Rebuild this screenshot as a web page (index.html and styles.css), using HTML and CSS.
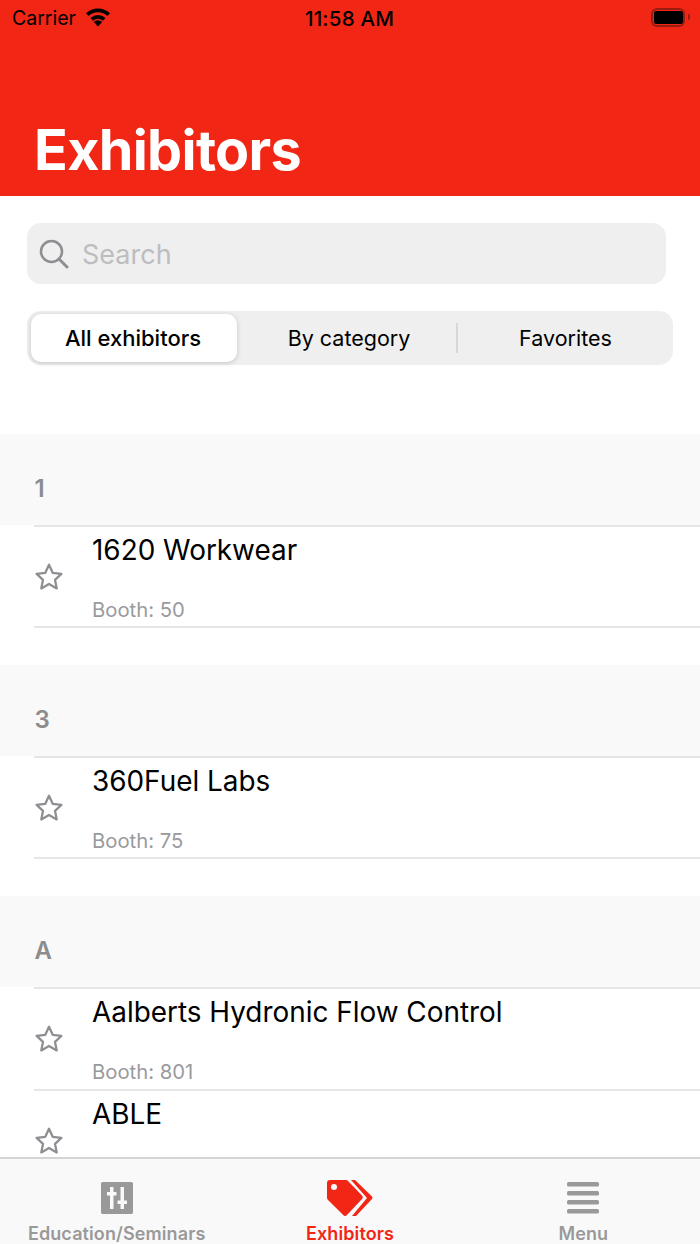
FILE: index.html
```html
<!DOCTYPE html>
<html lang="en">
<head>
<meta charset="utf-8">
<title>Exhibitors</title>
<link rel="stylesheet" href="styles.css">
</head>
<body>
<div class="app">
  <header class="hero">
    <div class="status">
      <div class="status-left">
        <span class="carrier">Carrier</span>
        <svg class="wifi" width="26" height="20" viewBox="0 0 26 20" fill="none"><path d="M2.300 7.600A15.500 15.500 0 0 1 23.700 7.600" stroke="#000" stroke-width="3.800"/><path d="M6.800 12.300A9 9 0 0 1 19.200 12.300" stroke="#000" stroke-width="3.800"/><path d="M13 19.500L8.800 14.900A6.200 6.200 0 0 1 17.200 14.900Z" fill="#000"/></svg>
      </div>
      <span class="clock">11:58 AM</span>
      <div class="battery"><span class="battery-fill"></span></div>
    </div>
    <h1 class="title">Exhibitors</h1>
  </header>

  <div class="controls">
    <div class="search">
      <svg class="search-icon" width="30" height="30" viewBox="0 0 30 30" fill="none"><circle cx="12.500" cy="12.500" r="10.500" stroke="#8e8e93" stroke-width="2.600"/><path d="M20 20l8 8" stroke="#8e8e93" stroke-width="3" stroke-linecap="round"/></svg>
      <span class="search-text">Search</span>
    </div>
    <div class="segments">
      <div class="segment active">All exhibitors</div>
      <div class="segment shifted">By category</div>
      <div class="divider"></div>
      <div class="segment">Favorites</div>
    </div>
  </div>

  <main class="list">
    <section class="group">
      <h2 class="group-head">1</h2>
      <div class="row">
        <svg class="star" width="30" height="30" viewBox="0 0 30 30"><path d="M15 2.800l3.700 8 8.700 1-6.400 6 1.700 8.600L15 22l-7.700 4.400L9 17.800l-6.400-6 8.700-1z" fill="none" stroke="#8e8e93" stroke-width="2.300" stroke-linejoin="round"/></svg>
        <div class="row-body"><div class="name">1620 Workwear</div><div class="booth">Booth: 50</div></div>
      </div>
    </section>
    <section class="group">
      <h2 class="group-head">3</h2>
      <div class="row">
        <svg class="star" width="30" height="30" viewBox="0 0 30 30"><path d="M15 2.800l3.700 8 8.700 1-6.400 6 1.700 8.600L15 22l-7.700 4.400L9 17.800l-6.400-6 8.700-1z" fill="none" stroke="#8e8e93" stroke-width="2.300" stroke-linejoin="round"/></svg>
        <div class="row-body"><div class="name">360Fuel Labs</div><div class="booth">Booth: 75</div></div>
      </div>
    </section>
    <section class="group">
      <h2 class="group-head">A</h2>
      <div class="row">
        <svg class="star" width="30" height="30" viewBox="0 0 30 30"><path d="M15 2.800l3.700 8 8.700 1-6.400 6 1.700 8.600L15 22l-7.700 4.400L9 17.800l-6.400-6 8.700-1z" fill="none" stroke="#8e8e93" stroke-width="2.300" stroke-linejoin="round"/></svg>
        <div class="row-body"><div class="name">Aalberts Hydronic Flow Control</div><div class="booth">Booth: 801</div></div>
      </div>
      <div class="row">
        <svg class="star" width="30" height="30" viewBox="0 0 30 30"><path d="M15 2.800l3.700 8 8.700 1-6.400 6 1.700 8.600L15 22l-7.700 4.400L9 17.800l-6.400-6 8.700-1z" fill="none" stroke="#8e8e93" stroke-width="2.300" stroke-linejoin="round"/></svg>
        <div class="row-body"><div class="name">ABLE</div></div>
      </div>
    </section>
  </main>

  <nav class="tabs">
    <div class="tab">
      <svg class="tab-icon" width="32" height="36" viewBox="0 -2 32 36"><path fill-rule="evenodd" fill="#999" d="M2.500 0h27A2 2 0 0 1 32 2.500v27a2 2 0 0 1-2.500 2.500h-27A2 2 0 0 1 0 29.500v-27A2 2 0 0 1 2.500 0zM9 5v5H6v3.500h3V27h3.500V13.500h3V10h-3V5zM19.500 5v13.500h-3V22h3v5H23v-5h3v-3.500h-3V5z"/></svg>
      <span class="tab-label">Education/Seminars</span>
    </div>
    <div class="tab tab-active">
      <svg class="tab-icon" width="46" height="36" viewBox="0 0 46 36"><path fill="#f12614" d="M3 0h16a3 3 0 0 1 2 .9L35 15.500a2.600 2.600 0 0 1 0 3.500L20 35a2.600 2.600 0 0 1-3.800 0L1 20a3 3 0 0 1-1-2.200V3a3 3 0 0 1 3-3zM7 4a3 3 0 1 0 0 6 3 3 0 0 0 0-6z"/><path fill="#f12614" d="M24 0h4L44.500 16a2.400 2.400 0 0 1 0 3.500L29 36h-4l15-18z"/></svg>
      <span class="tab-label">Exhibitors</span>
    </div>
    <div class="tab">
      <svg class="tab-icon" width="32" height="36" viewBox="0 -2 32 36"><g fill="#999"><rect y="0" width="32" height="4.400" rx="1.500"/><rect y="9" width="32" height="4.400" rx="1.500"/><rect y="18" width="32" height="4.400" rx="1.500"/><rect y="27" width="32" height="4.400" rx="1.500"/></g></svg>
      <span class="tab-label">Menu</span>
    </div>
  </nav>
</div>
</body>
</html>
```
FILE: styles.css
```css
* { box-sizing: border-box; }
html, body { margin: 0; padding: 0; }
body { font-family: Inter, "Liberation Sans", sans-serif; background: #fff; color: #000; }
.app { width: 700px; height: 1244px; display: flex; flex-direction: column; overflow: hidden; }

.hero { height: 196px; flex: none; background: #f12614; padding: 0 15px 0 12px; display: flex; flex-direction: column; }
.status { height: 37px; display: grid; grid-template-columns: 1fr auto 1fr; align-items: center; }
.status-left { display: flex; align-items: center; gap: 9px; }
.carrier { font-size: 19.500px; line-height: 37px; }
.wifi { margin-top: -3px; }
.clock { font-size: 20.500px; font-weight: 500; line-height: 37px; letter-spacing: .2px; margin-left: 2px; }
.battery { justify-self: end; width: 34px; height: 19px; border: 2px solid #9a1b10; border-radius: 6px; padding: 1px .5px; position: relative; margin-top: -3px; }
.battery::after { content: ""; position: absolute; right: -7px; top: 4.500px; width: 2px; height: 6px; background: #9a1b10; border-radius: 0 2px 2px 0; }
.battery-fill { display: block; height: 100%; background: #000; border-radius: 2px; }
.title { margin: 80px 0 0 22px; color: #fff; font-size: 55.700px; line-height: 66px; font-weight: 700; letter-spacing: -.7px; }

.controls { flex: none; height: 238px; padding: 27px 27px 0; }
.search { width: 639px; height: 61px; background: #efefef; border-radius: 14px; display: flex; align-items: center; padding-left: 12px; gap: 13px; }
.search-text { font-size: 27px; color: #bdbdc0; margin-top: 1px; }
.segments { margin-top: 27px; width: 646px; height: 54px; background: #efefef; border-radius: 14px; display: grid; grid-template-columns: 206px 219px 2px 1fr; align-items: center; padding: 3px 0 3px 4px; }
.segment { font-size: 21.500px; text-align: center; line-height: 48px; font-weight: 400; }
.shifted { padding-left: 5px; }
.segment.active { background: #fff; border-radius: 10px; font-size: 22px; font-weight: 500; padding-right: 2px; box-shadow: 0 1px 5px rgba(0,0,0,.18); }
.divider { width: 2px; height: 30px; background: #d8d8d8; }

.list { flex: 1; min-height: 0; overflow: hidden; }
.group { margin-bottom: 37px; }
.group:last-child { margin-bottom: 0; }
.group-head { margin: 0; height: 91px; background: #f9f9f9; color: #8c8c8f; font-size: 24px; font-weight: 600; padding: 40px 0 0 34.500px; line-height: 30px; }
.row { height: 102px; margin-left: 34px; border-top: 2px solid #e6e6e6; display: flex; align-items: center; gap: 28px; }
.group .row:last-child { border-bottom: 2px solid #e6e6e6; height: 103px; }
.star { flex: none; }
.row-body { flex: 1; height: 100%; display: flex; flex-direction: column; }
.name { font-size: 27.900px; line-height: 44px; margin-top: 1px; }
.booth { font-size: 20.300px; line-height: 26px; color: #9a9a9e; margin-top: 25px; }

.tabs { flex: none; height: 87px; background: #f9f9f9; border-top: 2px solid #d4d4d4; display: grid; grid-template-columns: repeat(3, 1fr); }
.tab { display: flex; flex-direction: column; align-items: center; padding-top: 21px; color: #999; }
.tab-icon { display: block; }
.tab-label { font-size: 18px; font-weight: 600; line-height: 24px; margin-top: 6px; letter-spacing: .1px; }
.tab-active { color: #f12614; }
```
